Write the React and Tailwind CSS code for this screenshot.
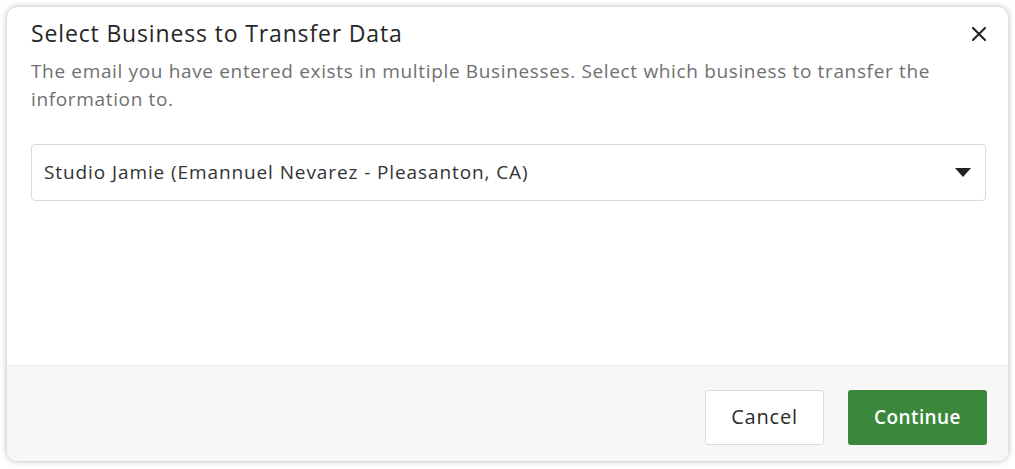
export default function App() {
  return (
    <div className="w-[1015px] h-[469px] bg-white p-[7px] pb-[8px] font-['Open_Sans','Liberation_Sans',sans-serif]">
      <div className="h-full bg-white rounded-[10px] overflow-hidden flex flex-col shadow-[0_0_6px_rgba(0,0,0,0.3)]">
        {/* Header */}
        <div className="pl-[24px] pr-[22px] pt-[12px] flex-1">
          <div className="flex items-start justify-between">
            <h2 className="text-[23px] leading-[28px] tracking-[0.85px] text-[#262626]">Select Business to Transfer Data</h2>
            <button className="mt-[8px] text-[#222]">
              <svg width="14" height="14" viewBox="0 0 14 14" fill="none">
                <path d="M1 1L13 13M13 1L1 13" stroke="currentColor" strokeWidth="2" strokeLinecap="square" />
              </svg>
            </button>
          </div>
          <p className="mt-[10px] text-[19px] leading-[28px] tracking-[0.65px] text-[#707070] pr-[30px]">
            The email you have entered exists in multiple Businesses. Select which business to transfer the information to.
          </p>

          {/* Select */}
          <div className="mt-[31px] h-[57px] border border-[#d9d9d9] rounded-[4px] flex items-center justify-between pl-[12px] pr-[14px]">
            <span className="text-[19px] tracking-[0.9px] text-[#333]">Studio Jamie (Emannuel Nevarez - Pleasanton, CA)</span>
            <svg width="16" height="9" viewBox="0 0 16 9">
              <path d="M0 0H16L8 9Z" fill="#222" />
            </svg>
          </div>
        </div>

        {/* Footer */}
        <div className="h-[96px] bg-[#f7f7f7] border-t border-[#e8e8e8] flex items-center justify-end gap-[24px] pr-[21px] pt-[7px]">
          <button className="w-[119px] h-[55px] bg-white border border-[#dcdcdc] rounded-[3px] text-[20px] tracking-[0.8px] text-[#2b2b2b]">
            Cancel
          </button>
          <button className="w-[139px] h-[55px] bg-[#3b873b] rounded-[3px] text-[19px] tracking-[0.4px] text-white font-semibold">
            Continue
          </button>
        </div>
      </div>
    </div>
  );
}
